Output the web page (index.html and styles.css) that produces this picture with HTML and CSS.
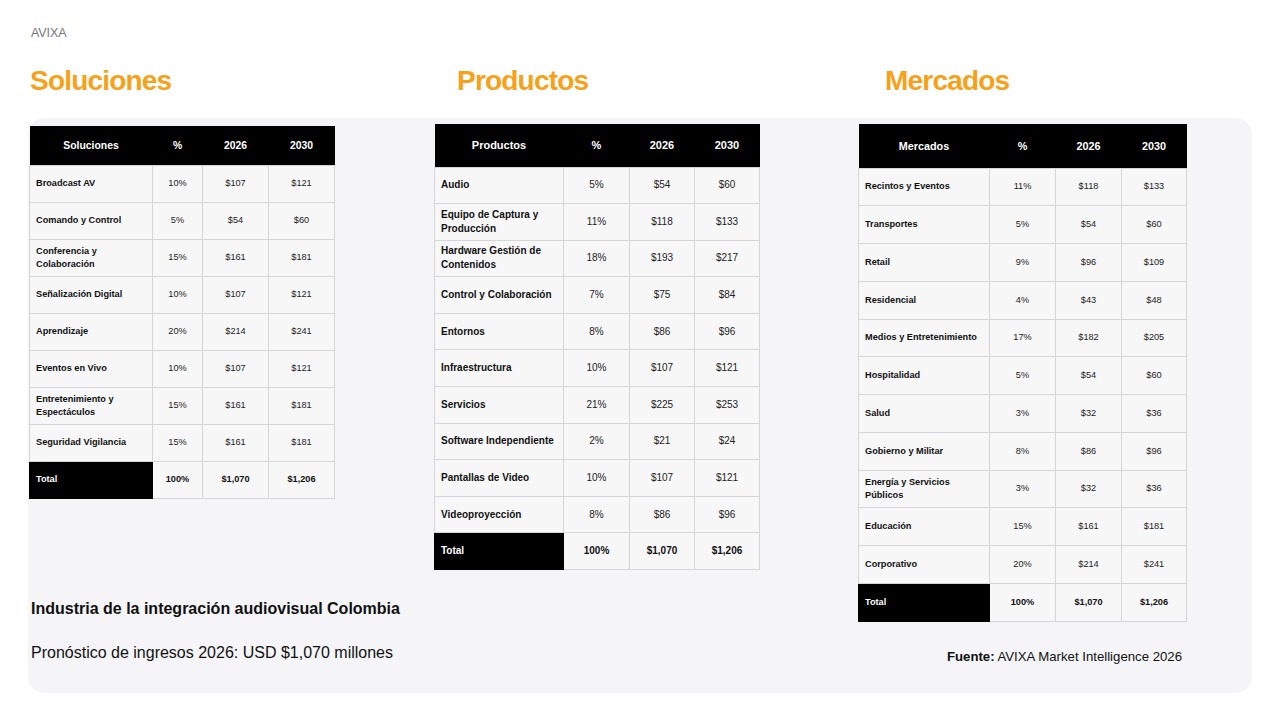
FILE: index.html
```html
<!DOCTYPE html>
<html lang="es">
<head>
<meta charset="utf-8">
<title>AVIXA – Colombia</title>
<link rel="stylesheet" href="styles.css">
</head>
<body>
<header class="brand">AVIXA</header>
<div class="titles">
  <h2 class="title">Soluciones</h2>
  <h2 class="title">Productos</h2>
  <h2 class="title">Mercados</h2>
</div>
<main class="panel">
  <section class="col col-1">
    <table class="data t1">
      <colgroup><col class="c-name"><col class="c-pct"><col class="c-y1"><col class="c-y2"></colgroup>
      <thead><tr><th>Soluciones</th><th>%</th><th>2026</th><th>2030</th></tr></thead>
      <tbody>
        <tr><td class="name">Broadcast AV</td><td>10%</td><td>$107</td><td>$121</td></tr>
        <tr><td class="name">Comando y Control</td><td>5%</td><td>$54</td><td>$60</td></tr>
        <tr><td class="name">Conferencia y Colaboración</td><td>15%</td><td>$161</td><td>$181</td></tr>
        <tr><td class="name">Señalización Digital</td><td>10%</td><td>$107</td><td>$121</td></tr>
        <tr><td class="name">Aprendizaje</td><td>20%</td><td>$214</td><td>$241</td></tr>
        <tr><td class="name">Eventos en Vivo</td><td>10%</td><td>$107</td><td>$121</td></tr>
        <tr><td class="name">Entretenimiento y Espectáculos</td><td>15%</td><td>$161</td><td>$181</td></tr>
        <tr><td class="name">Seguridad Vigilancia</td><td>15%</td><td>$161</td><td>$181</td></tr>
        <tr class="total"><td class="name">Total</td><td>100%</td><td>$1,070</td><td>$1,206</td></tr>
      </tbody>
    </table>
    <div class="summary">
      <p class="summary-title">Industria de la integración audiovisual Colombia</p>
      <p class="summary-text">Pronóstico de ingresos 2026: USD $1,070 millones</p>
    </div>
  </section>
  <section class="col col-2">
    <table class="data t2">
      <colgroup><col class="c-name"><col class="c-pct"><col class="c-y1"><col class="c-y2"></colgroup>
      <thead><tr><th>Productos</th><th>%</th><th>2026</th><th>2030</th></tr></thead>
      <tbody>
        <tr><td class="name">Audio</td><td>5%</td><td>$54</td><td>$60</td></tr>
        <tr><td class="name">Equipo de Captura y Producción</td><td>11%</td><td>$118</td><td>$133</td></tr>
        <tr><td class="name">Hardware Gestión de Contenidos</td><td>18%</td><td>$193</td><td>$217</td></tr>
        <tr><td class="name">Control y Colaboración</td><td>7%</td><td>$75</td><td>$84</td></tr>
        <tr><td class="name">Entornos</td><td>8%</td><td>$86</td><td>$96</td></tr>
        <tr><td class="name">Infraestructura</td><td>10%</td><td>$107</td><td>$121</td></tr>
        <tr><td class="name">Servicios</td><td>21%</td><td>$225</td><td>$253</td></tr>
        <tr><td class="name">Software Independiente</td><td>2%</td><td>$21</td><td>$24</td></tr>
        <tr><td class="name">Pantallas de Video</td><td>10%</td><td>$107</td><td>$121</td></tr>
        <tr><td class="name">Videoproyección</td><td>8%</td><td>$86</td><td>$96</td></tr>
        <tr class="total"><td class="name">Total</td><td>100%</td><td>$1,070</td><td>$1,206</td></tr>
      </tbody>
    </table>
  </section>
  <section class="col col-3">
    <table class="data t3">
      <colgroup><col class="c-name"><col class="c-pct"><col class="c-y1"><col class="c-y2"></colgroup>
      <thead><tr><th>Mercados</th><th>%</th><th>2026</th><th>2030</th></tr></thead>
      <tbody>
        <tr><td class="name">Recintos y Eventos</td><td>11%</td><td>$118</td><td>$133</td></tr>
        <tr><td class="name">Transportes</td><td>5%</td><td>$54</td><td>$60</td></tr>
        <tr><td class="name">Retail</td><td>9%</td><td>$96</td><td>$109</td></tr>
        <tr><td class="name">Residencial</td><td>4%</td><td>$43</td><td>$48</td></tr>
        <tr><td class="name">Medios y Entretenimiento</td><td>17%</td><td>$182</td><td>$205</td></tr>
        <tr><td class="name">Hospitalidad</td><td>5%</td><td>$54</td><td>$60</td></tr>
        <tr><td class="name">Salud</td><td>3%</td><td>$32</td><td>$36</td></tr>
        <tr><td class="name">Gobierno y Militar</td><td>8%</td><td>$86</td><td>$96</td></tr>
        <tr><td class="name">Energía y Servicios Públicos</td><td>3%</td><td>$32</td><td>$36</td></tr>
        <tr><td class="name">Educación</td><td>15%</td><td>$161</td><td>$181</td></tr>
        <tr><td class="name">Corporativo</td><td>20%</td><td>$214</td><td>$241</td></tr>
        <tr class="total"><td class="name">Total</td><td>100%</td><td>$1,070</td><td>$1,206</td></tr>
      </tbody>
    </table>
    <p class="source"><strong>Fuente:</strong> AVIXA Market Intelligence 2026</p>
  </section>
</main>
</body>
</html>
```

FILE: styles.css
```css
* { box-sizing: border-box; }

html, body {
  margin: 0;
  padding: 0;
  background: #ffffff;
  width: 1280px;
  height: 720px;
  overflow: hidden;
}

body {
  font-family: "Liberation Sans", Arial, Helvetica, sans-serif;
  color: #111111;
}

.brand {
  padding: 26px 0 0 31px;
  height: 50px;
  font-size: 12.5px;
  line-height: 14px;
  color: #777777;
  letter-spacing: -0.1px;
}

.titles {
  display: grid;
  grid-template-columns: 427px 428px 1fr;
  padding-left: 30px;
  height: 68px;
}

.title {
  margin: 0;
  padding-top: 16px;
  font-size: 28px;
  line-height: 30px;
  font-weight: 700;
  letter-spacing: -0.8px;
  color: #f7a11b;
}

.panel {
  margin: 0 28px;
  height: 575px;
  background: #f5f5f7;
  border-radius: 16px;
  display: grid;
  grid-template-columns: 406px 424px 1fr;
}

.col {
  display: flex;
  flex-direction: column;
}

.col-1 { padding-top: 8px; padding-left: 1px; }
.col-2 { padding-top: 6px; }
.col-3 { padding-top: 6px; }

.data {
  border-collapse: collapse;
  table-layout: fixed;
  background: #f7f7f8;
}

.data th {
  background: #000000;
  color: #ffffff;
  font-weight: 700;
  text-align: center;
  padding: 0;
  border: none;
}

.data td {
  border: 1px solid #d6d6d8;
  text-align: center;
  padding: 0 4px;
  color: #222222;
  line-height: 1.4;
}

.data td.name {
  text-align: left;
  font-weight: 700;
  padding-left: 6px;
  color: #111111;
}

.data tr.total td {
  font-weight: 700;
  color: #111111;
}

.data tr.total td.name {
  background: #000000;
  color: #ffffff;
  border-color: #000000;
}

/* Table 1 */
.t1 { width: 305px; font-size: 9.2px; }
.t1 th { height: 39px; font-size: 10.4px; }
.t1 td { height: 37px; }
.t1 .c-name { width: 123px; }
.t1 .c-pct { width: 50px; }
.t1 .c-y1 { width: 66px; }
.t1 .c-y2 { width: 66px; }

/* Table 2 */
.t2 { width: 325px; font-size: 10px; }
.t2 th { height: 43px; font-size: 11px; }
.t2 td { height: 36.6px; }
.t2 .c-name { width: 129px; }
.t2 .c-pct { width: 66px; }
.t2 .c-y1 { width: 65px; }
.t2 .c-y2 { width: 65px; }

/* Table 3 */
.t3 { width: 328px; font-size: 9.2px; }
.t3 th { height: 44px; font-size: 10.8px; }
.t3 td { height: 37.75px; }
.t3 .c-name { width: 131px; }
.t3 .c-pct { width: 66px; }
.t3 .c-y1 { width: 66px; }
.t3 .c-y2 { width: 65px; }

.summary {
  margin-top: auto;
  padding: 0 0 30px 2px;
}

.summary p { margin: 0; }

.summary-title {
  font-size: 16px;
  font-weight: 700;
  line-height: 20px;
  color: #111111;
}

.summary .summary-text {
  margin-top: 24px;
  font-size: 16px;
  line-height: 20px;
  color: #111111;
}

.source {
  margin: auto 0 27px 0;
  width: 324px;
  text-align: right;
  font-size: 13.2px;
  line-height: 18px;
  color: #111111;
}

.source strong { font-weight: 700; }
```
